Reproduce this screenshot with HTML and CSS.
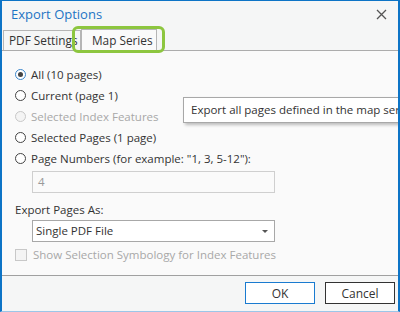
FILE: index.html
```html
<!DOCTYPE html>
<html lang="en">
<head>
    <meta charset="UTF-8">
    <title>Export Options</title>
    <link rel="stylesheet" href="styles.css">
</head>
<body>
    <div class="window">
        <div class="titlebar">
            <span class="title">Export Options</span>
            <svg class="close" width="11" height="11" viewBox="0 0 11 11"><path d="M1 1L10 10M10 1L1 10" stroke="#555" stroke-width="1.3"/></svg>
        </div>
        <div class="tabs">
            <div class="tab">PDF Settings</div>
            <div class="tab active">Map Series</div>
        </div>
        <div class="panel">
            <label class="row"><span class="radio checked"></span>All (10 pages)</label>
            <label class="row"><span class="radio"></span>Current (page 1)</label>
            <label class="row disabled"><span class="radio"></span>Selected Index Features</label>
            <label class="row"><span class="radio"></span>Selected Pages (1 page)</label>
            <label class="row"><span class="radio"></span>Page Numbers (for example: "1, 3, 5-12"):</label>
            <div class="field">4</div>
            <div class="caption">Export Pages As:</div>
            <div class="select">Single PDF File <span class="arrow"></span></div>
            <label class="row disabled check"><span class="box"></span>Show Selection Symbology for Index Features</label>
        </div>
        <div class="footer">
            <button class="btn ok">OK</button>
            <button class="btn">Cancel</button>
        </div>
        <div class="tooltip">Export all pages defined in the map series.</div>
    </div>
</body>
</html>
```
FILE: styles.css
```css
body { margin: 0; overflow: hidden; font-family: "Open Sans", "Noto Sans", sans-serif; font-size: 11.5px; color: #333; }
.window { position: relative; width: 400px; height: 312px; box-sizing: border-box; background: #f5f6f6; border: 2px solid #0d74c6; border-top-width: 1px; border-bottom: 1px solid #9cc6e8; display: flex; flex-direction: column; overflow: hidden; }
.titlebar { height: 29px; display: flex; justify-content: space-between; align-items: center; padding: 0 11px 0 9px; box-sizing: border-box; }
.title { font-size: 13px; color: #1d74c4; margin-top: -3px; }
.close { margin-top: -3px; }
.tabs { display: flex; height: 20px; padding-left: 1px; position: relative; z-index: 1; }
.tab { border: 1px solid #b5b5b5; border-bottom: none; padding: 0 0 0 5px; line-height: 19px; font-size: 11.8px; width: 78px; box-sizing: border-box; overflow: hidden; white-space: nowrap; }
.tab.active { position: relative; overflow: visible; background: #fafafa; height: 21px; width: 76px; padding: 0 0 0 10px; margin-top: -1px; line-height: 21px; }
.tab.active::after { content: ""; position: absolute; left: -10px; top: -4px; right: -9px; bottom: -3px; border: 3px solid #8dc63f; border-radius: 6px; }
.panel { border-top: 1px solid #acacac; background: #fafafa; height: 225px; box-sizing: border-box; padding: 13px 0 0 13px; }
.row { display: flex; align-items: center; height: 21px; font-size: 11.5px; }
.radio { width: 11px; height: 11px; border: 1px solid #444; border-radius: 50%; background: #fff; margin-right: 5px; box-sizing: border-box; display: flex; align-items: center; justify-content: center; }
.radio.checked { border-color: #3c87cc; }
.radio.checked::after { content: ""; width: 5px; height: 5px; border-radius: 50%; background: #444; }
.disabled { color: #a8a8a8; }
.disabled .radio { border-color: #c8c8c8; background: #f4f4f4; }
.field { margin: 2px 0 0 17px; width: 243px; height: 22px; box-sizing: border-box; border: 1px solid #cfcfcf; color: #999; padding-left: 5px; line-height: 20px; }
.caption { margin-top: 7px; height: 20px; line-height: 20px; }
.select { margin-left: 17px; width: 243px; height: 22px; box-sizing: border-box; border: 1px solid #a8a8a8; background: #fff; padding-left: 3px; line-height: 20px; display: flex; justify-content: space-between; align-items: center; padding-right: 6px; }
.arrow { width: 0; height: 0; border-left: 3px solid transparent; border-right: 3px solid transparent; border-top: 3px solid #555; }
.check { margin-top: 2px; }
.box { width: 12px; height: 12px; border: 1px solid #c8c8c8; background: #f4f4f4; box-sizing: border-box; margin-right: 6px; }
.footer { border-top: 1px solid #a0a0a0; flex: 1; display: flex; justify-content: flex-end; align-items: flex-start; gap: 10px; padding: 6px 3px 0 0; }
.btn { width: 70px; height: 22px; background: #fff; border: 1px solid #333; font-family: inherit; font-size: 12px; color: #333; padding: 0; }
.btn.ok { border-color: #1a7bd0; }
.tooltip { position: absolute; left: 181px; top: 96px; white-space: nowrap; background: #fff; border: 1px solid #a8a8a8; padding: 0 7px; height: 24px; line-height: 23px; font-size: 11.5px; box-shadow: 2px 2px 3px rgba(0,0,0,0.25); }
```
